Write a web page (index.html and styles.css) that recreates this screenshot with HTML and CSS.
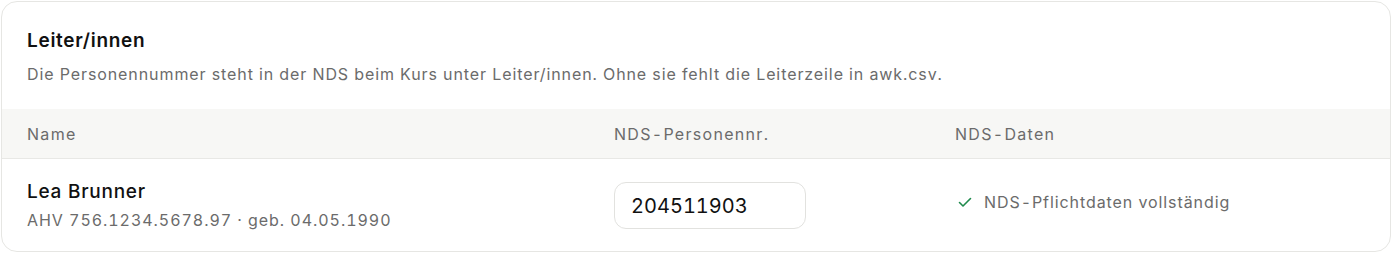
FILE: index.html
```html
<!DOCTYPE html>
<html lang="de">
<head>
<meta charset="utf-8">
<link rel="stylesheet" href="styles.css">
</head>
<body>
<section class="card">
  <header class="card-head">
    <h2 class="title">Leiter/innen</h2>
    <p class="desc">Die Personennummer steht in der NDS beim Kurs unter Leiter/innen. Ohne sie fehlt die Leiterzeile in awk.csv.</p>
  </header>
  <div class="table">
    <div class="row head-row">
      <div class="cell c-name">Name</div>
      <div class="cell c-nr">NDS-Personennr.</div>
      <div class="cell c-data">NDS-Daten</div>
    </div>
    <div class="row body-row">
      <div class="cell c-name">
        <div class="person">Lea Brunner</div>
        <div class="meta">AHV 756.1234.5678.97 · geb. 04.05.1990</div>
      </div>
      <div class="cell c-nr">
        <input class="nr-input" type="text" value="204511903">
      </div>
      <div class="cell c-data">
        <span class="status">
          <svg class="check" width="16" height="16" viewBox="0 0 16 16" fill="none" stroke="#1f8a4c" stroke-width="1.6" stroke-linecap="round" stroke-linejoin="round"><path d="M2.5 8.5l3.5 3.5 7.5-7.5"/></svg>
          <span class="status-text">NDS-Pflichtdaten vollständig</span>
        </span>
      </div>
    </div>
  </div>
</section>
</body>
</html>
```
FILE: styles.css
```css
* { box-sizing: border-box; }
html, body { margin: 0; padding: 0; background: #ffffff; }
body {
  font-family: Inter, "Noto Sans", "Liberation Sans", sans-serif;
  font-variant-numeric: tabular-nums;
  color: #1a1a1a;
  padding: 1px 1px 0 1px;
}
.card {
  border: 1px solid #e6e6e3;
  border-radius: 16px;
  background: #fff;
  overflow: hidden;
  height: 251px;
}
.card-head {
  padding: 27px 25px 24px;
}
.title {
  margin: 0;
  font-size: 19px;
  font-weight: 600;
  line-height: 24px;
  letter-spacing: 0.7px;
  color: #111;
}
.desc {
  margin: 10px 0 0;
  font-size: 16px;
  line-height: 22px;
  letter-spacing: 0.91px;
  color: #6b6b6b;
}
.row {
  display: grid;
  grid-template-columns: 587px 341px 1fr;
  padding: 0 25px;
}
.head-row {
  background: #f7f7f5;
  border-bottom: 1px solid #e8e8e5;
  height: 50px;
  align-items: center;
  font-size: 16px;
  letter-spacing: 1.3px;
  color: #6b6b6b;
}
.body-row {
  align-items: center;
  padding-top: 22px;
  padding-bottom: 22px;
}
.person {
  font-size: 19px;
  font-weight: 500;
  line-height: 22px;
  letter-spacing: 0.75px;
  color: #111;
}
.meta {
  margin-top: 7px;
  font-size: 16px;
  line-height: 20px;
  letter-spacing: 0.95px;
  color: #6b6b6b;
}
.nr-input {
  width: 192px;
  height: 47px;
  border: 1px solid #e2e2df;
  border-radius: 12px;
  padding: 0 16px;
  font-family: inherit;
  font-variant-numeric: tabular-nums;
  font-size: 20px;
  letter-spacing: 0;
  color: #111;
  background: #fff;
  outline: none;
}
.body-row .c-data { align-self: start; padding-top: 11px; }
.status {
  display: inline-flex;
  align-items: center;
  gap: 11px;
  font-size: 16px;
  line-height: 20px;
  letter-spacing: 0.92px;
  color: #6b6b6b;
  margin-left: 2px;
}
.check { display: block; }
```
